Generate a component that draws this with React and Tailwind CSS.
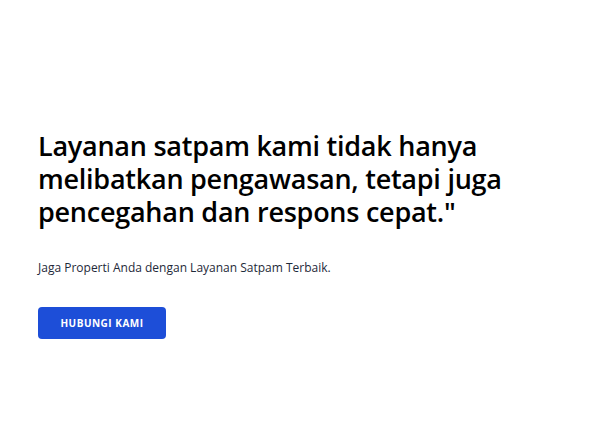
import React from 'react';

const App = () => {
  return (
    <div className="min-h-[425px] w-full bg-white flex flex-col pt-[129px] px-[38px]" style={{ fontFamily: '"Open Sans", "Noto Sans", sans-serif' }}>
      {/* Hero quote */}
      <h1 className="text-[27px] leading-[33px] font-semibold text-black max-w-[480px] tracking-[-0.25px]">
        Layanan satpam kami tidak hanya melibatkan pengawasan, tetapi juga pencegahan dan respons cepat."
      </h1>

      <p className="mt-[31px] text-[12px] text-gray-800">Jaga Properti Anda dengan Layanan Satpam Terbaik.</p>

      {/* Call to action */}
      <div className="mt-[30px]">
        <button className="w-[128px] h-[32px] rounded bg-[#1d4ed8] text-white text-[10px] font-bold tracking-[0.5px] uppercase">
          Hubungi Kami
        </button>
      </div>
    </div>
  );
};

export default App;
